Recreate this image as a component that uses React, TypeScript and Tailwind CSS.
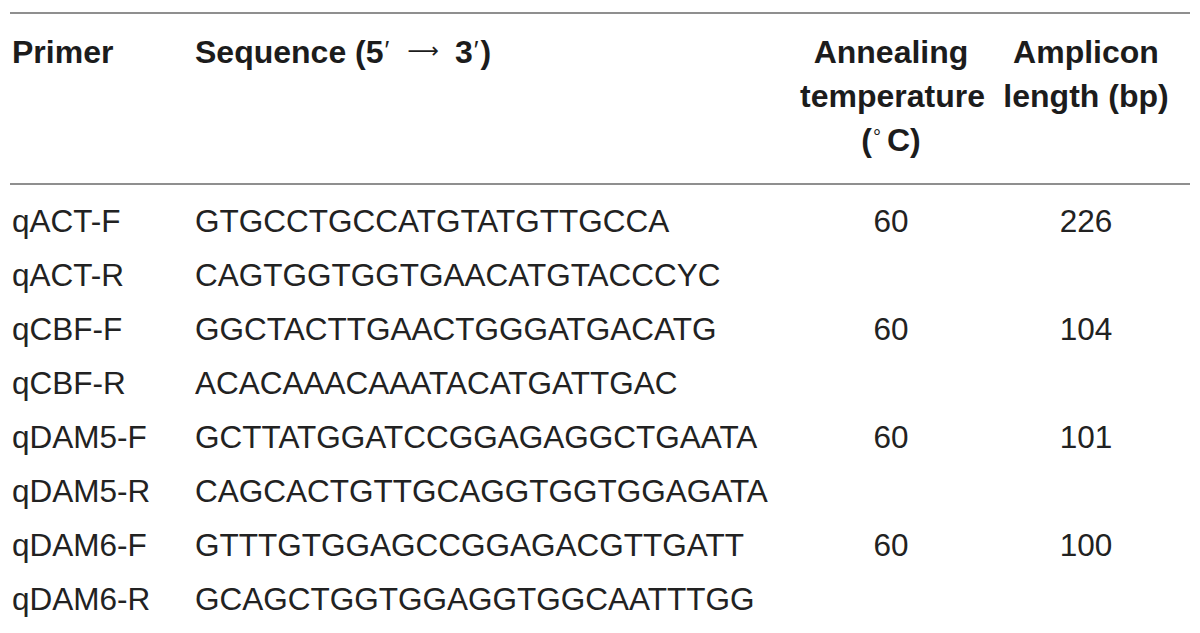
const rows = [
  { primer: "qACT-F", seq: "GTGCCTGCCATGTATGTTGCCA", temp: "60", len: "226" },
  { primer: "qACT-R", seq: "CAGTGGTGGTGAACATGTACCCYC", temp: "", len: "" },
  { primer: "qCBF-F", seq: "GGCTACTTGAACTGGGATGACATG", temp: "60", len: "104" },
  { primer: "qCBF-R", seq: "ACACAAACAAATACATGATTGAC", temp: "", len: "" },
  { primer: "qDAM5-F", seq: "GCTTATGGATCCGGAGAGGCTGAATA", temp: "60", len: "101" },
  { primer: "qDAM5-R", seq: "CAGCACTGTTGCAGGTGGTGGAGATA", temp: "", len: "" },
  { primer: "qDAM6-F", seq: "GTTTGTGGAGCCGGAGACGTTGATT", temp: "60", len: "100" },
  { primer: "qDAM6-R", seq: "GCAGCTGGTGGAGGTGGCAATTTGG", temp: "", len: "" },
]

// primer table, 4 columns: name / sequence / Tm / amplicon
const cols = "grid grid-cols-[185px_605px_182px_1fr]"

function Prime() {
  return <span className="inline-block align-top leading-none text-[26px] font-normal relative top-[7px] ml-[1px] mr-[2px]">′</span>
}

export default function App() {
  return (
    <div className="w-[1200px] h-[633px] bg-white px-[10px] pt-[12px] overflow-hidden font-['Liberation_Sans',Arial,sans-serif] text-[#1c1c1c]">
      <div className="border-t-2 border-[#8f8f8f]">
        <div className={`${cols} h-[171px] border-b-2 border-[#8f8f8f] pt-[16px] text-[32px] font-bold leading-[44px]`}>
          <div className="pl-[2px]">Primer</div>
          <div className="whitespace-nowrap">
            Sequence (5<Prime />
            <span className="inline-block mx-[16px] font-normal text-[22px] leading-none font-['DejaVu_Sans',sans-serif] relative top-[-5px]">⟶</span>
            3<Prime />)
          </div>
          <div className="text-center">
            Annealing<br />temperature<br />
            (<span className="inline-block align-top leading-none text-[20px] font-normal relative top-[9px] ml-[1px] mr-[6px]">°</span>C)
          </div>
          <div className="text-center">Amplicon<br />length (bp)</div>
        </div>
        <div className="pt-[10px]">
          {rows.map((r) => (
            <div key={r.primer} className={`${cols} h-[54px] items-center text-[31.5px] text-[#222]`}>
              <div className="pl-[2px]">{r.primer}</div>
              <div>{r.seq}</div>
              <div className="text-center">{r.temp}</div>
              <div className="text-center">{r.len}</div>
            </div>
          ))}
        </div>
      </div>
    </div>
  )
}
